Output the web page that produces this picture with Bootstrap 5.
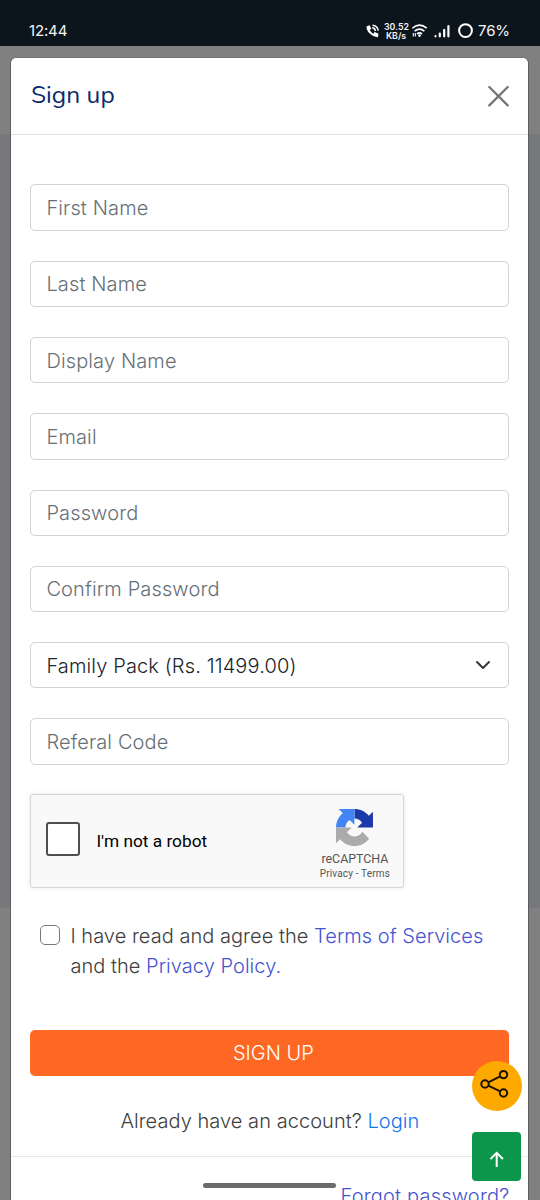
<!DOCTYPE html>
<html lang="en">
<head>
<meta charset="utf-8">
<meta name="viewport" content="width=device-width, initial-scale=1">
<title>Sign up</title>
<link href="https://cdn.jsdelivr.net/npm/bootstrap@5.3.0/dist/css/bootstrap.min.css" rel="stylesheet">
<style>
  html, body { height: 1200px; overflow: hidden; }
  body { font-family: Inter, "Liberation Sans", sans-serif; font-size: 20px; font-weight: 330; line-height: 30px; color: #404040; background: #808080; }
  .screen { height: 1200px; }
  .status-bar { height: 46px; background: #0c141c; color: #f4f5f6; font-family: Inter, sans-serif; font-size: 15px; line-height: 20px; font-weight: 400; padding: 21px 30px 0 29px; }
  .speed { font-size: 8.8px; line-height: 9px; font-weight: 600; width: 24px; margin-top: 1px; }
  .clock { letter-spacing: -.15px; }
  .charge { width: 32px; letter-spacing: -.1px; }
  .backdrop { height: 1154px; padding: 11px 10.6px 0 10px; background: linear-gradient(#808080 88px, #77787c 88px, #77787c 862px, #808080 862px); }
  .sheet { height: 1200px; border: 1px solid #5d5e60; border-top-color: #757575; border-radius: 6px; }
  .sheet-head { height: 77px; padding: 0 19px 0 20px; border-bottom: 1px solid #dee2e6; }
  .sheet-title { font-family: "Nunito", "Noto Sans", sans-serif; font-size: 24.5px; font-weight: 400; color: #0d2c6c; line-height: 30px; padding-bottom: 3px; letter-spacing: .05px; }
  .sheet-body { padding: 49.4px 19px 0 19.4px; }
  .fields { gap: 29.9px; }
  .fields .form-control, .fields .form-select { height: 46.4px; font-size: 20px; font-weight: 330; padding: 1px 15px 0; border: 1px solid #d0d2d4; border-radius: 5px; line-height: 30px; color: #212529; letter-spacing: .13px; }
  .fields .form-control::placeholder { color: #676f77; opacity: 1; }
  .fields .form-select { background-size: 16px 16px; background-position: right 17px center; }
  .captcha { width: 374px; height: 93.6px; margin-top: 29.5px; background: #f9f9f9; border: 1px solid #d6d6d6; border-radius: 3px; box-shadow: 0 0 4px rgba(0,0,0,.1); font-family: Roboto, sans-serif; font-weight: 400; padding: 0 13px 0 15px; }
  .captcha-box { width: 34px; height: 34px; border: 2px solid #4f4f4f; border-radius: 3px; background: #fff; margin-top: -4px; }
  .captcha-label { font-size: 17.3px; color: #000; margin-left: 16px; line-height: 22px; }
  .captcha-brand { width: 71px; color: #555; padding-top: 14px; }
  .captcha-name { font-size: 12.4px; line-height: 15px; margin-top: 5px; }
  .captcha-links { font-size: 10px; line-height: 15px; white-space: nowrap; letter-spacing: .15px; }
  .agree { margin: 33px 0 0 10px; gap: 10px; letter-spacing: .04px; }
  .agree-box { width: 20px; height: 20px; margin: 4px 0 0; border: 1.3px solid #777; border-radius: 3px; flex: none; }
  .policy { color: #4553d0; text-decoration: none; }
  .signup { height: 46.5px; margin-top: 49px; background: #ff6822; color: #fff; border: 0; border-radius: 5px; font-size: 20px; font-weight: 330; padding: 0 0 0 7px; }
  .login { color: #1677ea; text-decoration: none; }
  .already { margin-top: 30px; letter-spacing: .05px; }
  .sheet-foot { margin-top: 20px; border-top: 1px solid #e8e9ea; padding: 24px 19px 0; letter-spacing: .2px; }
  .share { left: 472px; top: 1061px; width: 50px; height: 50px; background: #fea900; border-radius: 50%; }
  .to-top { left: 472px; top: 1132px; width: 49.4px; height: 49.4px; background: #0b964b; border-radius: 4px; }
  .home-pill { left: 203px; top: 1182.5px; width: 133px; height: 5px; background: #6b6b6b; border-radius: 3px; }
</style>
<script src="https://cdn.jsdelivr.net/npm/bootstrap@5.3.0/dist/js/bootstrap.bundle.min.js"></script>
</head>
<body>
<div class="screen position-relative overflow-hidden">
  <header class="status-bar d-flex align-items-start">
    <span class="clock me-auto">12:44</span>
    <svg class="me-1" width="15" height="18" viewBox="0 0 15 18"><path d="M1.6 5.2 4.7 4.2 6.3 7.8 4.7 9.1Q6 11.6 8.2 12.7L9.8 11.1 13.5 12.8 13 16.2Q9 16.4 5 12.7T1.6 5.2Z" fill="#fff"/><path d="M7.3 6.8Q9.9 7 10.5 10M7.5 4.2Q12.4 4.5 13.2 9.7" fill="none" stroke="#fff" stroke-width="1.5"/></svg>
    <span class="speed text-center">30.52<br>KB/s</span>
    <svg class="ms-1" width="66" height="20" viewBox="0 0 66 20" fill="none" stroke="#fff"><g stroke-width="1.6"><path d="M.3 7.2Q7.5 .9 14.7 7.2M2.6 10.2Q7.5 5.9 12.4 10.2M4.9 13Q7.5 10.9 10.1 13"/></g><circle cx="7.5" cy="14.6" r="1.3" fill="#fff" stroke="none"/><path d="M1.3 12v3.6M3.3 12v3.6" stroke-width="1.1"/><g stroke-width="2.2" stroke-linecap="round"><path d="M23.5 15v.3M27.8 12.6v2.7M32.2 8.9v6.4M36.4 5.2v10.1"/></g><circle cx="53.5" cy="9.6" r="6.4" stroke-width="2"/></svg>
    <span class="charge text-end">76%</span>
  </header>
  <div class="backdrop">
    <main class="sheet bg-white">
      <div class="sheet-head d-flex align-items-center justify-content-between">
        <h1 class="sheet-title m-0">Sign up</h1>
        <svg width="21" height="21" viewBox="0 0 21 21" stroke="#757575" stroke-width="2.3" stroke-linecap="round"><path d="M1.3 1 19.7 19.4M19.7 1 1.3 19.4"/></svg>
      </div>
      <div class="sheet-body">
        <form class="fields d-flex flex-column">
          <input class="form-control" placeholder="First Name">
          <input class="form-control" placeholder="Last Name">
          <input class="form-control" placeholder="Display Name">
          <input class="form-control" placeholder="Email">
          <input class="form-control" placeholder="Password">
          <input class="form-control" placeholder="Confirm Password">
          <select class="form-select"><option>Family Pack (Rs. 11499.00)</option></select>
          <input class="form-control" placeholder="Referal Code">
        </form>
        <div class="captcha d-flex align-items-center">
          <div class="captcha-box"></div>
          <span class="captcha-label me-auto">I'm not a robot</span>
          <div class="captcha-brand d-flex flex-column align-items-center align-self-start">
            <svg width="37" height="37" viewBox="0 0 64 64"><path d="M64 31.955l-.033-1.37V4.687l-7.16 7.16C50.948 4.674 42.033.093 32.05.093V16.35c.485 0 .86.057 1.135.163 4.976.393 9.288 3.14 11.828 7.124l-8.307 8.307L64 31.953" fill="#1c3aa9"/><path d="M31.862.094l-1.37.033H4.594l7.16 7.16C4.58 13.147 0 22.06 0 32.046h16.26c0-.485.057-.86.163-1.135.393-4.976 3.14-9.288 7.124-11.828l8.307 8.307L31.86.095" fill="#4285f4"/><path d="M.001 32.045l.033 1.37v25.898l7.16-7.16c5.86 7.173 14.774 11.754 24.76 11.754 10.4 0 19.622-4.96 25.458-12.64l-11.736-11.86a15.55 15.55 0 0 1-4.754 5.334c-2.05 1.6-4.952 2.906-8.968 2.906-.485 0-.86-.057-1.135-.163-4.976-.393-9.288-3.14-11.828-7.124l8.307-8.307L.001 32.047" fill="#ababab"/></svg>
            <span class="captcha-name">reCAPTCHA</span>
            <span class="captcha-links">Privacy - Terms</span>
          </div>
        </div>
        <label class="agree d-flex align-items-start">
          <input type="checkbox" class="form-check-input agree-box">
          <span>I have read and agree the <a class="policy" href="#">Terms of Services</a><br>and the <a class="policy" href="#">Privacy Policy.</a></span>
        </label>
        <button class="signup btn w-100" type="button">SIGN UP</button>
        <p class="already text-center mb-0">Already have an account? <a class="login" href="#">Login</a></p>
      </div>
      <div class="sheet-foot text-end"><a class="policy" href="#">Forgot password?</a></div>
    </main>
  </div>
  <div class="share position-absolute"><svg width="50" height="50" viewBox="0 0 50 50" fill="none" stroke="#1d1200" stroke-width="2"><circle cx="13" cy="23" r="3.7"/><circle cx="31.5" cy="13.6" r="3.7"/><circle cx="31.5" cy="32" r="3.7"/><path d="M16.3 21.3 28.2 15.3M16.3 24.7 28.2 30.3"/></svg></div>
  <div class="to-top position-absolute"><svg width="49" height="49" viewBox="0 0 49 49" fill="none" stroke="#fff" stroke-width="2"><path d="M24.7 35V21M18.5 27 24.7 20.8 30.9 27"/></svg></div>
  <div class="home-pill position-absolute"></div>
</div>
</body>
</html>
